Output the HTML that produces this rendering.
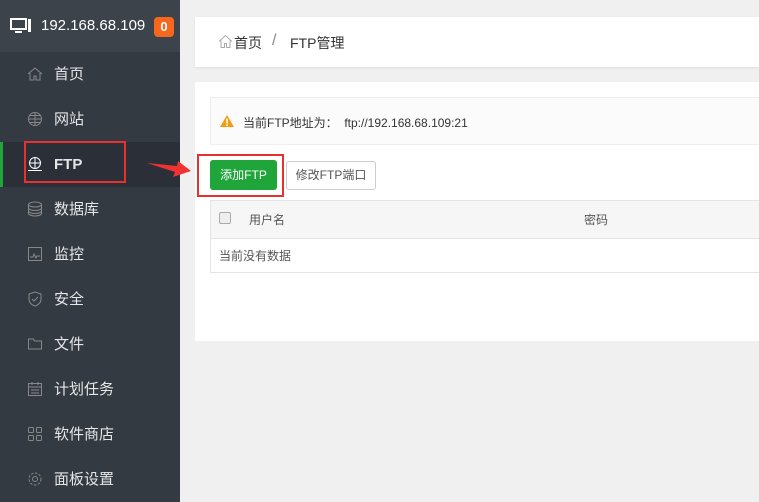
<!DOCTYPE html>
<html><head><meta charset="utf-8"><style>
*{margin:0;padding:0;box-sizing:border-box}
body{width:759px;height:502px;overflow:hidden;background:#f0f0f0;font-family:"Liberation Sans","Noto Sans CJK SC",sans-serif;position:relative}
.side{position:absolute;left:0;top:0;width:180px;height:502px;background:#333a42}
.top{position:absolute;left:0;top:0;width:180px;height:52px;background:#3c434b;color:#fff;font-size:15px}
.item{position:absolute;left:0;width:180px;height:45px;color:#e6e6e6;font-size:15px;line-height:45px;padding-left:54px}
.item svg{position:absolute;left:27px;top:14px}
.act{background:#2b3038;border-left:3px solid #20a53a;font-weight:bold}
.pan{position:absolute;background:#fff}
.abs{position:absolute}
</style></head><body>
<div class="side"></div>
<div class="top">
<svg class="abs" style="left:10px;top:18px" width="22" height="16" viewBox="0 0 22 16"><rect x="1" y="1" width="15" height="10" fill="none" stroke="#fff" stroke-width="2"/><rect x="5" y="13" width="7" height="2" fill="#fff"/><rect x="18" y="1" width="3" height="13" fill="#fff"/></svg>
<span class="abs" style="left:41px;top:17px">192.168.68.109</span>
<span class="abs" style="left:154px;top:17px;width:20px;height:20px;background:#f7671d;border-radius:4px;font-size:13px;font-weight:bold;text-align:center;line-height:20px">0</span>
</div>
<div class="item" style="top:52px"><svg width="16" height="16" viewBox="0 0 16 16" fill="none" stroke="#888"><path d="M1 8L8 2l7 6M3 7v7h4v-4h2v4h4V7"/></svg>首页</div>
<div class="item" style="top:97px"><svg width="16" height="16" viewBox="0 0 16 16" fill="none" stroke="#888"><circle cx="8" cy="8" r="6.5"/><path d="M1.5 8h13M8 1.5v13M3 4.5h10M3 11.5h10"/></svg>网站</div>
<div class="item act" style="top:142px;padding-left:51px"><svg style="left:24px" width="16" height="16" viewBox="0 0 16 16" fill="none" stroke="#fff"><circle cx="8" cy="7" r="5.5"/><path d="M2.5 7h11M8 1.5v11M1 14.5h14"/></svg>FTP</div>
<div class="item" style="top:187px"><svg width="16" height="16" viewBox="0 0 16 16" fill="none" stroke="#888"><ellipse cx="8" cy="3.5" rx="6.5" ry="2.5"/><path d="M1.5 3.5v9c0 1.4 3 2.5 6.5 2.5s6.5-1.1 6.5-2.5v-9M1.5 7c0 1.4 3 2.5 6.5 2.5s6.5-1.1 6.5-2.5M1.5 10c0 1.4 3 2.5 6.5 2.5s6.5-1.1 6.5-2.5"/></svg>数据库</div>
<div class="item" style="top:232px"><svg width="16" height="16" viewBox="0 0 16 16" fill="none" stroke="#888"><rect x="1.5" y="1.5" width="13" height="13"/><path d="M3 11h3l1-3 2 4 1-2h3"/></svg>监控</div>
<div class="item" style="top:277px"><svg width="16" height="16" viewBox="0 0 16 16" fill="none" stroke="#888"><path d="M8 1l6 2v5c0 4-3 6-6 7-3-1-6-3-6-7V3z M5 8l2 2 4-4"/></svg>安全</div>
<div class="item" style="top:322px"><svg width="16" height="16" viewBox="0 0 16 16" fill="none" stroke="#888"><path d="M1.5 3h5l1 2h7v8h-13z"/></svg>文件</div>
<div class="item" style="top:367px"><svg width="16" height="16" viewBox="0 0 16 16" fill="none" stroke="#888"><rect x="1.5" y="2.5" width="13" height="12"/><path d="M1.5 6h13M5 1v3M11 1v3M4 9h8M4 12h8"/></svg>计划任务</div>
<div class="item" style="top:412px"><svg width="16" height="16" viewBox="0 0 16 16" fill="none" stroke="#888"><rect x="1.5" y="1.5" width="5" height="5" rx="1"/><rect x="9.5" y="1.5" width="5" height="5" rx="1"/><rect x="1.5" y="9.5" width="5" height="5" rx="1"/><rect x="9.5" y="9.5" width="5" height="5" rx="1"/></svg>软件商店</div>
<div class="item" style="top:457px"><svg width="16" height="16" viewBox="0 0 16 16" fill="none" stroke="#888"><circle cx="8" cy="8" r="2.5"/><circle cx="8" cy="8" r="6" stroke-dasharray="2.5 1.5"/></svg>面板设置</div>
<div class="abs" style="left:24px;top:141px;width:102px;height:42px;border:2px solid #e8302f"></div>
<svg class="abs" style="left:140px;top:155px" width="55" height="30"><polygon points="7,8 37,11 38,6 51,16 33,22 35,17" fill="#f03232"/></svg>

<div class="pan" style="left:195px;top:17px;width:564px;height:50px;box-shadow:0 1px 2px #ddd"></div>
<svg class="abs" style="left:218px;top:34px" width="15" height="15" viewBox="0 0 15 15" fill="none" stroke="#aaa"><path d="M1 7.5L7.5 1.5 14 7.5M3 6.5v7h3.5v-4h2v4H12v-7"/></svg>
<span class="abs" style="left:234px;top:33px;font-size:14px;color:#333">首页</span>
<span class="abs" style="left:272px;top:32px;font-size:16px;color:#888">/</span>
<span class="abs" style="left:290px;top:33px;font-size:14px;color:#333">FTP管理</span>

<div class="pan" style="left:195px;top:82px;width:564px;height:259px"></div>
<div class="abs" style="left:210px;top:97px;width:560px;height:48px;background:#fbfbfb;border:1px solid #eee"></div>
<svg class="abs" style="left:220px;top:115px" width="14" height="12"><polygon points="7,0 14,12 0,12" fill="#f39c12"/><rect x="6.2" y="3.5" width="1.6" height="5" fill="#fff"/><rect x="6.2" y="9.5" width="1.6" height="1.5" fill="#fff"/></svg>
<span class="abs" style="left:243px;top:114px;font-size:12px;color:#333">当前FTP地址为：&nbsp;&nbsp;ftp://192.168.68.109:21</span>
<div class="abs" style="left:210px;top:160px;width:67px;height:30px;background:#20a53a;border-radius:3px;color:#fff;font-size:12px;line-height:30px;text-align:center">添加FTP</div>
<div class="abs" style="left:197px;top:154px;width:87px;height:43px;border:2px solid #e8302f"></div>
<div class="abs" style="left:286px;top:161px;width:90px;height:29px;border:1px solid #ccc;border-radius:3px;color:#555;font-size:12px;line-height:27px;text-align:center">修改FTP端口</div>
<div class="abs" style="left:210px;top:200px;width:560px;height:39px;background:#f6f6f6;border-top:1px solid #e4e4e4;border-bottom:1px solid #e4e4e4;border-left:1px solid #e4e4e4"></div>
<div class="abs" style="left:219px;top:212px;width:12px;height:12px;border:1px solid #aaa;border-radius:2px;background:#eee"></div>
<span class="abs" style="left:249px;top:211px;font-size:12px;color:#555">用户名</span>
<span class="abs" style="left:584px;top:211px;font-size:12px;color:#555">密码</span>
<div class="abs" style="left:210px;top:238px;width:560px;height:35px;border-bottom:1px solid #e4e4e4;border-left:1px solid #e4e4e4"></div>
<span class="abs" style="left:219px;top:247px;font-size:12px;color:#555">当前没有数据</span>
</body></html>
